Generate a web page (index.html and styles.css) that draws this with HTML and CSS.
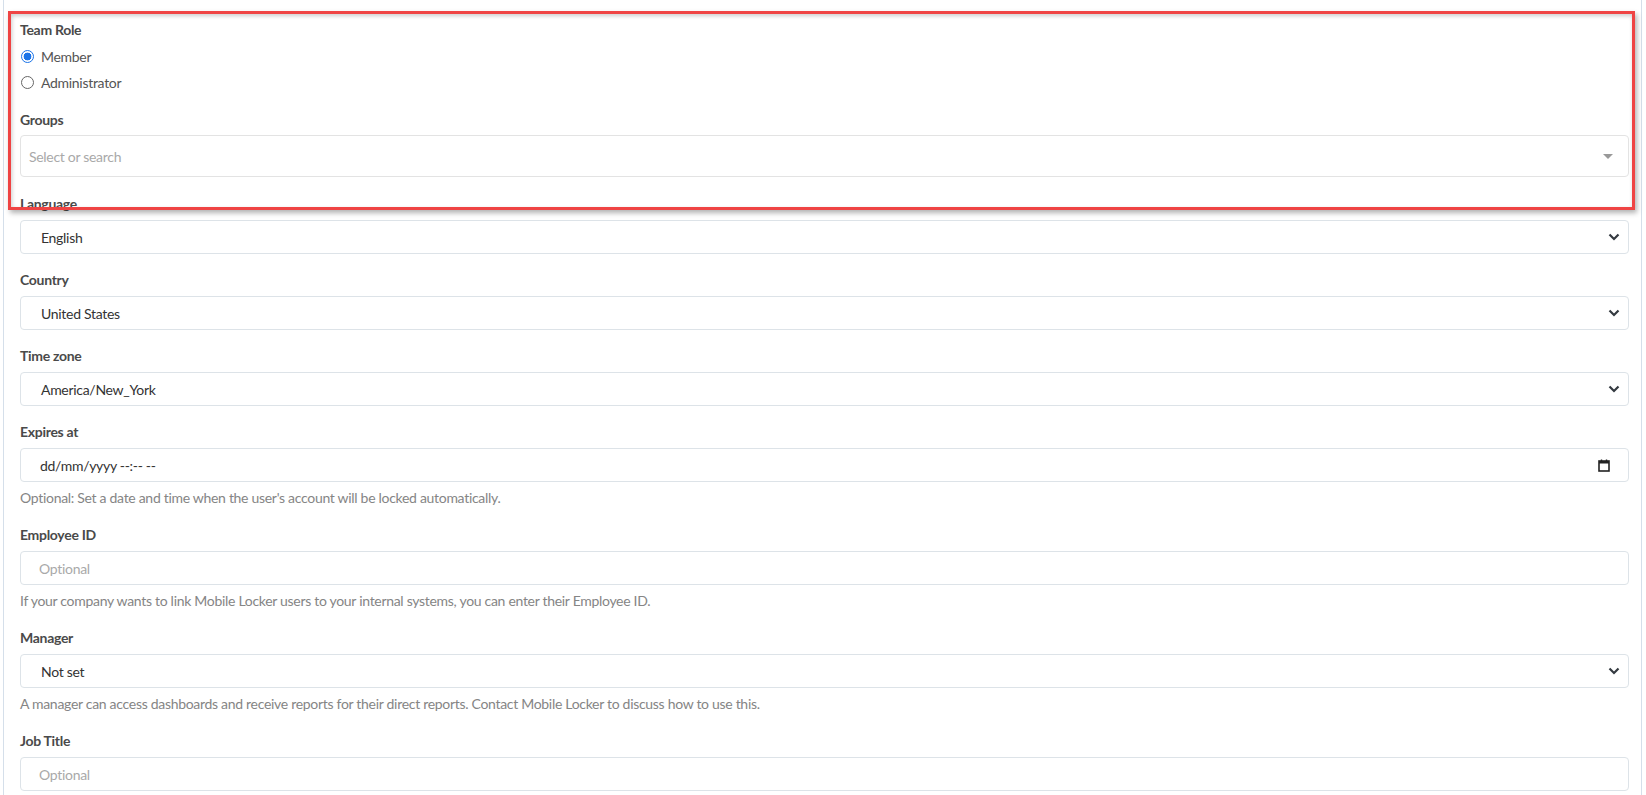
FILE: index.html
```html
<!DOCTYPE html>
<html lang="en">
<head>
  <meta charset="UTF-8" />
  <meta name="viewport" content="width=device-width, initial-scale=1.0" />
  <title>Edit User</title>
  <link rel="stylesheet" href="styles.css">
</head>
<body>
  <div class="card">
    <!-- Team role -->
    <div class="field radios">
      <div class="label">Team Role</div>
      <label class="radio"><span class="dot checked"></span>Member</label>
      <label class="radio"><span class="dot"></span>Administrator</label>
    </div>

    <div class="field groups-field">
      <div class="label tight">Groups</div>
      <div class="multi">
        <span class="placeholder">Select or search</span>
        <svg class="caret" width="10" height="5" viewBox="0 0 10 5"><path d="M0 0h10L5 5z" fill="#999"/></svg>
      </div>
    </div>

    <div class="field">
      <div class="label">Language</div>
      <div class="select">
        <span>English</span>
        <svg class="chev" width="12" height="8" viewBox="0 0 12 8"><path d="M1.5 1.5l4.5 4.5 4.5-4.5" fill="none" stroke="#343a40" stroke-width="2.2"/></svg>
      </div>
    </div>

    <div class="field">
      <div class="label">Country</div>
      <div class="select">
        <span>United States</span>
        <svg class="chev" width="12" height="8" viewBox="0 0 12 8"><path d="M1.5 1.5l4.5 4.5 4.5-4.5" fill="none" stroke="#343a40" stroke-width="2.2"/></svg>
      </div>
    </div>

    <div class="field">
      <div class="label">Time zone</div>
      <div class="select">
        <span>America/New_York</span>
        <svg class="chev" width="12" height="8" viewBox="0 0 12 8"><path d="M1.5 1.5l4.5 4.5 4.5-4.5" fill="none" stroke="#343a40" stroke-width="2.2"/></svg>
      </div>
    </div>

    <div class="field">
      <div class="label">Expires at</div>
      <div class="input date">
        <span>dd/mm/yyyy --:-- --</span>
        <svg class="cal" width="12" height="13" viewBox="0 0 12 13"><rect x="1" y="2" width="10" height="10" fill="none" stroke="#222" stroke-width="1.6"/><rect x="1" y="2" width="10" height="2.5" fill="#222"/><path d="M3.5 0.5v2M8.5 0.5v2" stroke="#222" stroke-width="1.4"/></svg>
      </div>
      <p class="help">Optional: Set a date and time when the user's account will be locked automatically.</p>
    </div>

    <div class="field">
      <div class="label">Employee ID</div>
      <div class="input"><span class="placeholder">Optional</span></div>
      <p class="help">If your company wants to link Mobile Locker users to your internal systems, you can enter their Employee ID.</p>
    </div>

    <div class="field">
      <div class="label">Manager</div>
      <div class="select">
        <span>Not set</span>
        <svg class="chev" width="12" height="8" viewBox="0 0 12 8"><path d="M1.5 1.5l4.5 4.5 4.5-4.5" fill="none" stroke="#343a40" stroke-width="2.2"/></svg>
      </div>
      <p class="help">A manager can access dashboards and receive reports for their direct reports. Contact Mobile Locker to discuss how to use this.</p>
    </div>

    <div class="field">
      <div class="label">Job Title</div>
      <div class="input"><span class="placeholder">Optional</span></div>
    </div>
  </div>

  <!-- annotation box drawn over the first fields -->
  <div class="highlight"></div>
</body>
</html>
```

FILE: styles.css
```css
body {
  margin: 0;
  font-family: 'Lato', 'Liberation Sans', sans-serif;
  font-size: 14px;
  letter-spacing: -0.3px;
  color: #333;
  background: #fff;
  overflow: hidden;
}

.card {
  margin: 0 4px 0 3px;
  padding: 19px 12px 16px 16px;
  border: 1px solid #d5dfea;
  border-top: 0;
}

.help {
  margin: 5px 0 0;
  line-height: 22px;
  color: #858585;
}

.field {
  margin-bottom: 15px;
}

.label {
  font-weight: 700;
  line-height: 22px;
  margin-bottom: 5px;
  color: #4a4a4a;
}

.label.tight {
  margin-bottom: 4px;
}

.radios {
  margin-bottom: 14px;
}

.radios .label {
  margin-bottom: 2px;
}

.radio {
  display: flex;
  align-items: center;
  height: 26px;
  color: #555;
}

.dot {
  width: 11px;
  height: 11px;
  border: 1px solid #666;
  border-radius: 50%;
  margin: 0 7px 0 1px;
  box-sizing: content-box;
}

.dot.checked {
  border-color: #1a73e8;
  background: radial-gradient(circle, #1a73e8 0 3.6px, #fff 4.2px);
}

.groups-field {
  margin-bottom: 16px;
}

.multi {
  display: flex;
  align-items: center;
  justify-content: space-between;
  height: 42px;
  box-sizing: border-box;
  padding: 0 15px 0 8px;
  border: 1px solid #e3e3e3;
  border-radius: 4px;
}

.placeholder {
  color: #a9a9a9;
}

.select,
.input {
  display: flex;
  align-items: center;
  justify-content: space-between;
  height: 34px;
  box-sizing: border-box;
  border: 1px solid #dde3e8;
  border-radius: 4px;
  color: #333;
}

.select {
  padding: 0 8px 0 20px;
}

.input {
  padding: 0 18px 0 18px;
}

.date {
  padding-left: 19px;
}

.highlight {
  position: absolute;
  left: 8px;
  top: 11px;
  width: 1627px;
  height: 199px;
  box-sizing: border-box;
  border: 3px solid #ef4444;
  box-shadow: 2px 3px 5px rgba(0, 0, 0, 0.3), inset 1px 2px 4px rgba(0, 0, 0, 0.2);
  pointer-events: none;
}
```
